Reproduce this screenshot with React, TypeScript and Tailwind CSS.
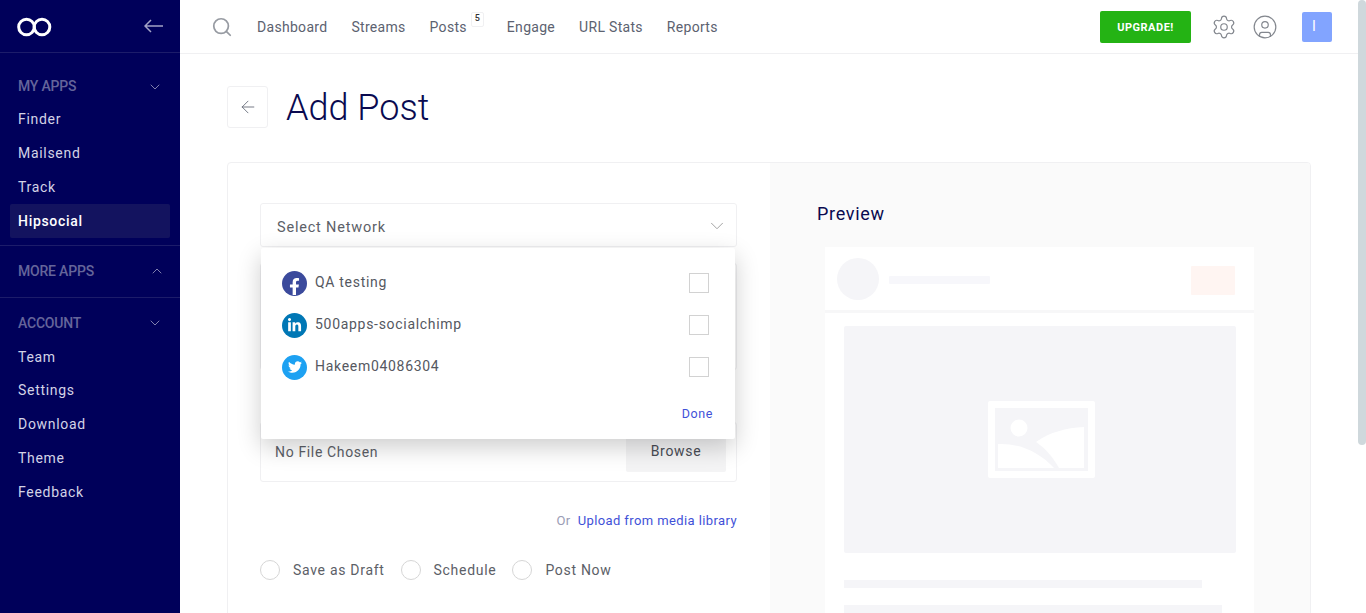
import React from 'react';
import { ArrowLeft, ChevronDown, ChevronUp, CircleUser, Search, Settings } from 'lucide-react';
import { FaFacebookF, FaLinkedinIn, FaTwitter } from 'react-icons/fa';

const font = { fontFamily: 'Roboto, sans-serif' };

const SectionHead = ({ label, open, short }: { label: string; open: boolean; short?: boolean }) => (
  <div
    className={`flex items-center justify-between pl-[18px] text-[14px] font-medium tracking-[-0.2px] text-[#65659a] ${
      short ? 'h-[33px] pt-[2px]' : 'h-[34px]'
    } ${open ? 'pr-[17px]' : 'pr-[15px]'}`}
  >
    <span>{label}</span>
    {open ? (
      <ChevronDown size={16} strokeWidth={1.5} className="text-[#7f7fae]" />
    ) : (
      <ChevronUp size={16} strokeWidth={1.5} className="text-[#7f7fae]" />
    )}
  </div>
);

const SideItem = ({ label, active, short }: { label: string; active?: boolean; short?: boolean }) => (
  <div
    className={`mx-[10px] flex items-center rounded-[2px] px-2 text-[14px] tracking-[0.7px] ${
      short ? 'h-[33px] pt-[2px]' : 'h-[34px]'
    } ${active ? 'bg-[#13135f] font-medium text-white' : 'text-[#d3d3e6]'}`}
  >
    {label}
  </div>
);

const Sidebar = () => (
  <aside className="flex h-full w-[180px] shrink-0 flex-col bg-[#00005a]">
    <div className="flex h-[53px] shrink-0 items-center justify-between border-b border-[#1c1c6a] pl-[17px] pr-[17px]">
      <svg className="mt-[2px]" width="35" height="20" viewBox="0 0 35 20" fill="none" stroke="white" strokeWidth="3">
        <circle cx="9.5" cy="10" r="7.8" />
        <circle cx="25" cy="10" r="7.8" />
      </svg>
      <svg className="-mt-[1px]" width="19" height="14" viewBox="0 0 19 14" fill="none" stroke="#a3a3c6" strokeWidth="1.5">
        <path d="M19 7H1M7 1L1 7l6 6" />
      </svg>
    </div>
    <div className="border-b border-[#1c1c6a] pb-[7px] pt-4">
      <SectionHead label="MY APPS" open short />
      <SideItem label="Finder" />
      <SideItem label="Mailsend" />
      <SideItem label="Track" />
      <SideItem label="Hipsocial" active />
    </div>
    <div className="border-b border-[#1c1c6a] pb-[9px] pt-[8px]">
      <SectionHead label="MORE APPS" open={false} />
    </div>
    <div className="pt-[8px]">
      <SectionHead label="ACCOUNT" open />
      <SideItem label="Team" short />
      <SideItem label="Settings" />
      <SideItem label="Download" />
      <SideItem label="Theme" />
      <SideItem label="Feedback" />
    </div>
  </aside>
);

const TopBar = () => (
  <header className="flex h-[54px] shrink-0 items-center border-b border-[#f0f0f2] bg-white pl-[31px] pr-[26px]">
    <Search size={22} strokeWidth={1.9} className="text-[#979ba2]" />
    <nav className="ml-[24px] mt-[1px] flex items-center gap-[24px] text-[14px] tracking-[0.3px] text-[#5c6270]">
      <span>Dashboard</span>
      <span>Streams</span>
      <span className="relative">
        Posts
        <span className="absolute -right-[17px] -top-[5px] flex h-[15px] w-[13px] items-center justify-center rounded-[2px] border border-[#f0f0f2] text-[9px] font-medium text-[#333]">
          5
        </span>
      </span>
      <span className="ml-[16px]">Engage</span>
      <span>URL Stats</span>
      <span>Reports</span>
    </nav>
    <button className="ml-auto flex h-[32px] w-[91px] items-center justify-center rounded-[2px] bg-[#24b314] pt-[3px] text-[11px] font-bold tracking-[0.5px] text-white">
      UPGRADE!
    </button>
    <Settings size={26} strokeWidth={1.1} className="ml-[20px] text-[#83878e]" />
    <CircleUser size={26} strokeWidth={1.1} className="ml-[15px] text-[#83878e]" />
    <div className="ml-[24px] flex h-[30px] w-[30px] items-center justify-center rounded-[2px] bg-[#82a4ff] pr-[6px] text-[14px] text-white">
      I
    </div>
  </header>
);

const accounts = [
  { name: 'QA testing', bg: 'bg-[#3b4a9c]', icon: <FaFacebookF size={17} className="mt-[6px] text-white" /> },
  { name: '500apps-socialchimp', bg: 'bg-[#0077b5]', icon: <FaLinkedinIn size={15} className="text-white" /> },
  { name: 'Hakeem04086304', bg: 'bg-[#1da1f2]', icon: <FaTwitter size={14} className="text-white" /> },
];

const NetworkDropdown = () => (
  <div className="absolute left-[1px] top-[45px] z-10 h-[191px] w-[474px] rounded-[2px] bg-white shadow-[0_8px_24px_rgba(0,0,0,0.2)]">
    <div className="flex flex-col pt-[14px]">
      {accounts.map((a) => (
        <div key={a.name} className="flex h-[42px] items-center pl-[21px] pr-[26px]">
          <span className={`flex h-[25px] w-[25px] items-center justify-center overflow-hidden rounded-full ${a.bg}`}>
            {a.icon}
          </span>
          <span className="mb-[2px] ml-[8px] text-[14px] tracking-[0.7px] text-[#55585f]">{a.name}</span>
          <span className="ml-auto h-[20px] w-[20px] border border-[#d2d2d2] bg-white" />
        </div>
      ))}
    </div>
    <div className="mt-[17px] pr-[22px] text-right text-[12.5px] tracking-[0.6px] text-[#3f51d8]">Done</div>
  </div>
);

const Radio = ({ label }: { label: string }) => (
  <label className="flex items-center gap-[13px] text-[14px] tracking-[0.7px] text-[#5c6067]">
    <span className="h-[20px] w-[20px] rounded-full border border-[#d6d6d6] bg-white" />
    {label}
  </label>
);

const FormColumn = () => (
  <div className="w-[542px] shrink-0 pl-[32px] pr-[33px] pt-[40px]">
    <div className="relative">
      <div className="flex h-[44px] items-center justify-between rounded-[3px] border border-[#f0f0f2] bg-white pl-[16px] pr-[8px] text-[14.5px] tracking-[0.8px] text-[#5c6067]">
        <span className="mt-[6px]">Select Network</span>
        <ChevronDown size={22} strokeWidth={1} className="mt-[2px] text-[#9a9a9a]" />
      </div>
      <NetworkDropdown />
    </div>
    <div className="mt-[16px] h-[107px] rounded-[3px] border border-[#f0f0f2]" />
    <div className="mt-[52px] flex h-[60px] items-center justify-between rounded-[3px] border border-[#f0f0f2] pl-[14px] pr-[10px]">
      <span className="text-[14px] tracking-[0.65px] text-[#5c6067]">No File Chosen</span>
      <span className="flex h-[40px] w-[100px] items-center justify-center rounded-[2px] bg-[#f4f4f5] pb-[2px] text-[14px] tracking-[0.7px] text-[#4a4d55]">
        Browse
      </span>
    </div>
    <div className="mt-[29px] flex justify-end gap-[7px] text-[13px] tracking-[0.4px]">
      <span className="text-[#9a9cb5]">Or</span>
      <span className="text-[#3f51d8]">Upload from media library</span>
    </div>
    <div className="mt-[29px] flex gap-[16px]">
      <Radio label="Save as Draft" />
      <Radio label="Schedule" />
      <Radio label="Post Now" />
    </div>
  </div>
);

const PreviewColumn = () => (
  <div className="min-w-0 flex-1 bg-[#fafafa] pl-[47px] pr-[56px] pt-[40px]">
    <div className="h-[44px] text-[18px] leading-[21px] tracking-[0.7px] text-[#0a0a50]">Preview</div>
    <div className="ml-[8px] w-[429px] bg-white">
      <div className="flex h-[63px] items-center rounded-t-[2px] pl-[12px] pr-[19px]">
        <span className="h-[42px] w-[42px] rounded-full bg-[#f5f5f8]" />
        <span className="ml-[10px] mt-[2px] h-[8px] w-[101px] rounded-[1px] bg-[#f7f7fb]" />
        <span className="ml-auto mt-[4px] h-[29px] w-[44px] rounded-[1px] bg-[#fff5f2]" />
      </div>
      <div className="h-[3px] bg-[#f7f7f8]" />
      <div className="pl-[19px] pr-[18px] pt-[13px]">
        <div className="flex h-[227px] items-center justify-center rounded-[2px] bg-[#f5f5f8]">
          <svg className="ml-[3px]" width="107" height="77" viewBox="0 0 107 77" fill="white">
            <path
              fillRule="evenodd"
              d="M2 0H105a2 2 0 0 1 2 2V75a2 2 0 0 1-2 2H2a2 2 0 0 1-2-2V2a2 2 0 0 1 2-2ZM7 7V70H100V7Z"
            />
            <circle cx="31" cy="27" r="8.5" />
            <path d="M10 43C30 42 50 50 66 67H10Z" />
            <path d="M48 41C62 31 78 27 96 26V67H71C65 56 57 47 48 41Z" />
          </svg>
        </div>
        <div className="mt-[27px] h-[8px] w-[358px] bg-[#f5f5f8]" />
        <div className="mt-[17px] h-[8px] w-[378px] bg-[#f5f5f8]" />
      </div>
    </div>
  </div>
);

const Scrollbar = () => (
  <div className="h-full w-[8px] shrink-0 bg-white">
    <div className="h-[445px] rounded-[4px] bg-[#cfd8dc]" />
  </div>
);

export default function App() {
  return (
    <div className="flex h-[613px] w-full overflow-hidden bg-white" style={font}>
      <Sidebar />
      <div className="flex min-w-0 flex-1 flex-col">
        <TopBar />
        <main className="min-h-0 flex-1 overflow-hidden pl-[47px] pr-[47px] pt-[32px]">
          <div className="flex h-[42px] items-center">
            <div className="flex h-[42px] w-[41px] items-center justify-center rounded-[3px] border border-[#f0f0f2]">
              <ArrowLeft size={20} strokeWidth={1} className="text-[#5c6270]" />
            </div>
            <h1 className="ml-[18px] mt-[1px] text-[36px] font-light leading-[42px] text-[#0a0a50]">Add Post</h1>
          </div>
          <div className="mt-[34px] flex h-[600px] overflow-hidden rounded-[4px] border border-[#f0f0f2]">
            <FormColumn />
            <PreviewColumn />
          </div>
        </main>
      </div>
      <Scrollbar />
    </div>
  );
}
